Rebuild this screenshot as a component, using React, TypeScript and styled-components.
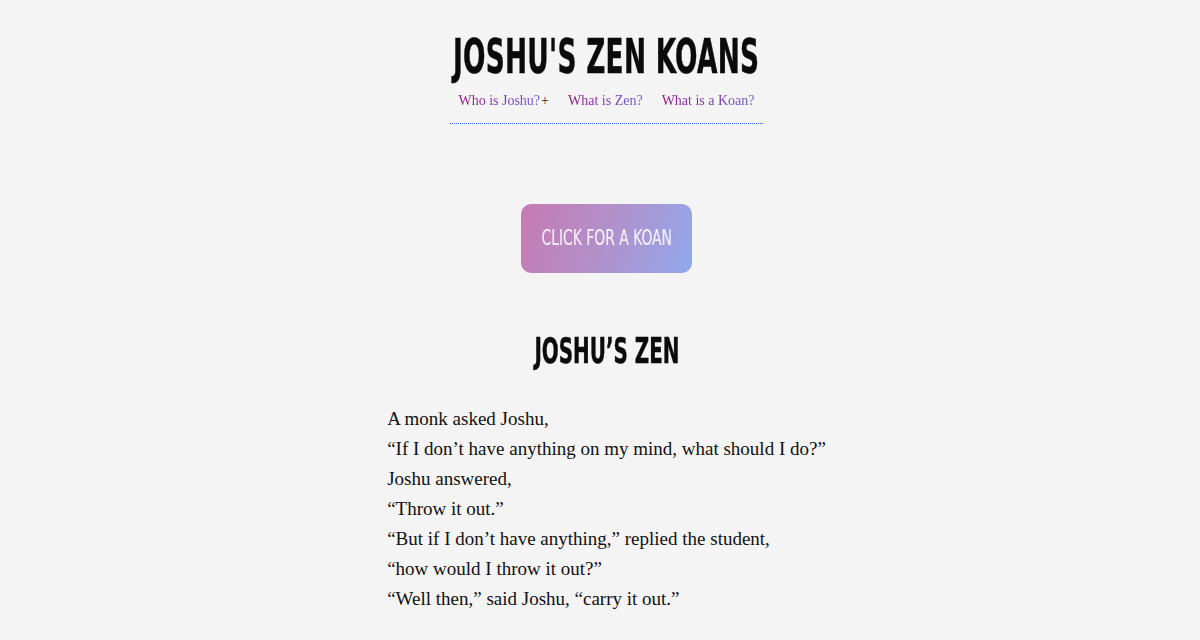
import React from "react";
import styled, { createGlobalStyle } from "styled-components";

const Global = createGlobalStyle`
  html, body { margin: 0; padding: 0; background: #f4f4f4; }
  body { font-family: "Liberation Serif", "Times New Roman", serif; color: #111; }
`;

const Page = styled.div`
  display: flex;
  flex-direction: column;
  align-items: center;
  padding: 28px 0 0 13px;
  min-height: 640px;
  box-sizing: border-box;
`;

const Header = styled.header`
  display: flex;
  flex-direction: column;
  align-items: center;
`;

const Condensed = styled.span<{ $scale: number }>`
  display: inline-block;
  transform: scaleX(${(p) => p.$scale});
  transform-origin: center;
  white-space: nowrap;
`;

const Title = styled.h1`
  margin: 0;
  font-family: "Liberation Sans Narrow", "DejaVu Sans Condensed", "Liberation Sans", sans-serif;
  font-weight: 700;
  font-size: 48px;
  line-height: 56px;
  color: #0b0b0b;
  letter-spacing: 0.5px;
  -webkit-text-stroke: 0.5px #0b0b0b;
`;

const Nav = styled.nav`
  display: flex;
  gap: 19px;
  margin-top: 7px;
  padding: 0 8px 12px;
  border-bottom: 1px dotted #2563eb;
  font-size: 14px;
  line-height: 20px;
`;

const NavItem = styled.span`
  display: inline-flex;
  align-items: baseline;
`;

const NavLink = styled.a`
  text-decoration: none;
  background: linear-gradient(90deg, #98148a 0%, #6a5ad6 100%);
  -webkit-background-clip: text;
  background-clip: text;
  color: transparent;
  cursor: pointer;
`;

const Plus = styled.span`
  color: #333;
  margin-left: 1px;
`;

const KoanButton = styled.button`
  margin-top: 80px;
  width: 171px;
  height: 69px;
  border: none;
  border-radius: 10px;
  background: linear-gradient(110deg, #c67ab2 0%, #b48ec7 45%, #92a8ee 100%);
  color: #f4eefa;
  font-family: "Liberation Sans Narrow", "DejaVu Sans Condensed", "Liberation Sans", sans-serif;
  font-weight: 400;
  font-size: 21px;
  line-height: 1;
  padding: 0;
  cursor: pointer;
  display: flex;
  align-items: center;
  justify-content: center;
  -webkit-text-stroke: 0.2px #f4eefa;
`;

const KoanTitle = styled.h2`
  margin: 56px 0 0;
  font-family: "Liberation Sans Narrow", "DejaVu Sans Condensed", "Liberation Sans", sans-serif;
  font-weight: 700;
  font-size: 36px;
  line-height: 44px;
  color: #0b0b0b;
  -webkit-text-stroke: 0.5px #0b0b0b;
`;

const KoanText = styled.div`
  margin-top: 31px;
  width: fit-content;
  text-align: left;
  font-size: 19px;
  line-height: 30px;
  color: #111;
`;

const Line = styled.div`
  white-space: nowrap;
`;

const lines = [
  "A monk asked Joshu,",
  "\u201CIf I don\u2019t have anything on my mind, what should I do?\u201D",
  "Joshu answered,",
  "\u201CThrow it out.\u201D",
  "\u201CBut if I don\u2019t have anything,\u201D replied the student,",
  "\u201Chow would I throw it out?\u201D",
  "\u201CWell then,\u201D said Joshu, \u201Ccarry it out.\u201D",
];

export default function App() {
  return (
    <>
      <Global />
      <Page>
        <Header>
          <Title>
            <Condensed $scale={0.61}>JOSHU'S ZEN KOANS</Condensed>
          </Title>
          <Nav>
            <NavItem>
              <NavLink>Who is Joshu?</NavLink>
              <Plus>+</Plus>
            </NavItem>
            <NavItem>
              <NavLink>What is Zen?</NavLink>
            </NavItem>
            <NavItem>
              <NavLink>What is a Koan?</NavLink>
            </NavItem>
          </Nav>
        </Header>
        <KoanButton>
          <Condensed $scale={0.735}>CLICK FOR A KOAN</Condensed>
        </KoanButton>
        <KoanTitle>
          <Condensed $scale={0.615}>JOSHU’S ZEN</Condensed>
        </KoanTitle>
        <KoanText>
          {lines.map((l, i) => (
            <Line key={i}>{l}</Line>
          ))}
        </KoanText>
      </Page>
    </>
  );
}
